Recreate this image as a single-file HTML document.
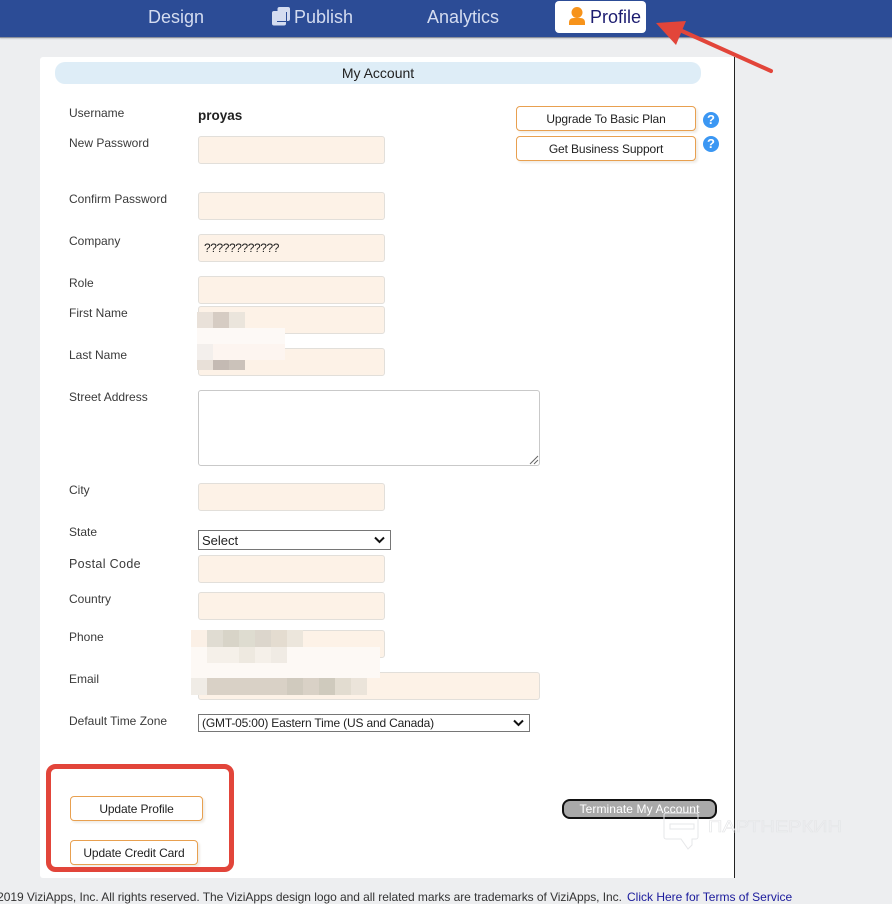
<!DOCTYPE html>
<html lang="en"><head><meta charset="utf-8"><title>My Account</title>
<style>
html,body{margin:0;padding:0}
body{width:892px;height:901px;position:relative;overflow:hidden;background:#edeef0;font-family:"Liberation Sans",sans-serif;color:#333}
#page>*{position:absolute}
.bar{left:0;top:0;width:892px;height:37px;background:#2c4c96;border-bottom:1px solid #8d919c;box-shadow:0 1px 1px #c9cbd0}
.nav{font-size:18px;color:#d4dcf0;line-height:20px;top:7px;white-space:nowrap}
.card{left:40px;top:57px;width:694px;height:821px;background:#fff;border-right:1px solid #222;border-radius:3px 0 0 3px}
.title{left:55px;top:62px;width:646px;height:22px;background:#deedf7;border-radius:10px;text-align:center;font-size:14px;line-height:22px;color:#222}
.l{left:69px;font-size:12px;line-height:14px;color:#3a3a3a;white-space:nowrap}
.i{left:198px;width:185px;height:26px;background:#fdf2e7;border:1px solid #e2dfda;border-radius:3px}
.b{box-sizing:border-box;height:25px;background:#fff;border:1px solid #e8a050;border-radius:4px;box-shadow:2px 2px 2px #f0ece6;text-align:center;font-size:12px;letter-spacing:-.12px;line-height:25px;color:#222;white-space:nowrap}
.q{width:16px;height:16px;border-radius:50%;background:#3b97f3;color:#fff;text-align:center;font-size:13px;font-weight:bold;line-height:16px}
.s{box-sizing:border-box;background:#fff;border:1px solid #767676;font-size:13px;line-height:19px;color:#222;padding-left:3px;white-space:nowrap}
.s svg{position:absolute;right:5px;top:5px}
.p{height:16px}
</style></head><body><div id="page">
<div class="bar"></div>
<div class="nav" style="left:148px">Design</div>
<svg style="left:271px;top:6px" width="20" height="20" viewBox="0 0 20 20"><rect x="6.500" y="1" width="12.500" height="14" rx="2" fill="#d4dcf0"/><rect x="1" y="5" width="14" height="14.500" rx="2" fill="#d4dcf0"/><path d="M15.500 6v9.500H6" fill="none" stroke="#2c4c96" stroke-width="1"/></svg>
<div class="nav" style="left:294px">Publish</div>
<div class="nav" style="left:427px">Analytics</div>
<div style="left:555px;top:1px;width:91px;height:32px;background:#fff;border-radius:4px"></div>
<svg style="left:568px;top:6px" width="18" height="20" viewBox="0 0 18 20"><circle cx="9" cy="6.500" r="5.500" fill="#f7931a"/><path d="M1 19v-2.500c0-3 2-4.500 5-4.500h6c3 0 5 1.500 5 4.500V19z" fill="#f7931a"/></svg>
<div class="nav" style="left:590px;color:#1c1c70">Profile</div>

<div class="card"></div>
<div class="title">My Account</div>

<div class="l" style="top:106px">Username</div>
<div style="left:198px;top:108px;font-size:13.500px;font-weight:bold;line-height:16px;color:#222">proyas</div>
<div class="l" style="top:136px">New Password</div><div class="i" style="top:136px"></div>
<div class="l" style="top:192px">Confirm Password</div><div class="i" style="top:192px"></div>
<div class="l" style="top:234px">Company</div><div class="i" style="top:234px"></div>
<div style="left:204px;top:241px;font-size:12px;line-height:14px;color:#222;letter-spacing:-.42px">????????????</div>
<div class="l" style="top:276px">Role</div><div class="i" style="top:276px"></div>
<div class="l" style="top:306px">First Name</div><div class="i" style="top:306px"></div>
<div class="l" style="top:348px">Last Name</div><div class="i" style="top:348px"></div>
<div class="l" style="top:390px">Street Address</div>
<div style="left:198px;top:390px;width:340px;height:74px;background:#fff;border:1px solid #c9c9c9;border-radius:3px"></div>
<svg style="left:529px;top:455px" width="10" height="10" viewBox="0 0 10 10"><path d="M1 9 9 1M5 9 9 5" stroke="#666" stroke-width="1"/></svg>
<div class="l" style="top:483px">City</div><div class="i" style="top:483px"></div>
<div class="l" style="top:525px">State</div>
<div class="s" style="left:198px;top:530px;width:193px;height:20px">Select<svg width="11" height="8" viewBox="0 0 11 8"><path d="M1 1.500 5.500 6 10 1.500" fill="none" stroke="#111" stroke-width="2"/></svg></div>
<div class="l" style="top:557px;font-size:12.500px;letter-spacing:.35px">Postal Code</div><div class="i" style="top:555px"></div>
<div class="l" style="top:592px">Country</div><div class="i" style="top:592px"></div>
<div class="l" style="top:630px">Phone</div><div class="i" style="top:630px"></div>
<div class="l" style="top:672px">Email</div><div class="i" style="top:672px;width:340px"></div>
<div class="l" style="top:714px">Default Time Zone</div>
<div class="s" style="left:198px;top:714px;width:332px;height:18px;line-height:17px;font-size:12px;letter-spacing:-.17px">(GMT-05:00) Eastern Time (US and Canada)<svg style="top:4px" width="11" height="8" viewBox="0 0 11 8"><path d="M1 1.500 5.500 6 10 1.500" fill="none" stroke="#111" stroke-width="2"/></svg></div>

<!-- pixelated blur -->
<div class="p" style="left:197px;top:312px;width:16px;background:#e9e1d9"></div>
<div class="p" style="left:213px;top:312px;width:16px;background:#d6ccc3"></div>
<div class="p" style="left:229px;top:312px;width:16px;background:#ebe5dc"></div>
<div class="p" style="left:197px;top:328px;width:88px;background:#fdf9f6"></div>
<div class="p" style="left:197px;top:344px;width:16px;background:#f3efec"></div>
<div class="p" style="left:213px;top:344px;width:72px;background:#fdf5f0"></div>
<div class="p" style="left:197px;top:360px;width:16px;height:10px;background:#e8e0d8"></div>
<div class="p" style="left:213px;top:360px;width:16px;height:10px;background:#c4bab3"></div>
<div class="p" style="left:229px;top:360px;width:16px;height:10px;background:#cbc2ba"></div>

<div style="left:191px;top:630px;width:16px;height:17px;background:#fbf0e6"></div>
<div style="left:207px;top:630px;width:16px;height:17px;background:#e0dcd2"></div>
<div style="left:223px;top:630px;width:16px;height:17px;background:#d8d4c8"></div>
<div style="left:239px;top:630px;width:16px;height:17px;background:#dedcd0"></div>
<div style="left:255px;top:630px;width:16px;height:17px;background:#dcd6cc"></div>
<div style="left:271px;top:630px;width:16px;height:17px;background:#e4dcd0"></div>
<div style="left:287px;top:630px;width:16px;height:17px;background:#ece6dc"></div>
<div style="left:191px;top:647px;width:189px;height:31px;background:#fdf9f5"></div>
<div style="left:207px;top:647px;width:32px;height:16px;background:#f5f0e9"></div>
<div style="left:239px;top:647px;width:16px;height:16px;background:#eee9e0"></div>
<div style="left:255px;top:647px;width:16px;height:16px;background:#f5f0e9"></div>
<div style="left:271px;top:647px;width:16px;height:16px;background:#f0ebe4"></div>
<div style="left:191px;top:678px;width:16px;height:17px;background:#f0ece6"></div>
<div style="left:207px;top:678px;width:112px;height:17px;background:#d9d1c6"></div>
<div style="left:287px;top:678px;width:16px;height:17px;background:#d0cabe"></div>
<div style="left:319px;top:678px;width:16px;height:17px;background:#cfcabd"></div>
<div style="left:335px;top:678px;width:16px;height:17px;background:#e2dcd0"></div>
<div style="left:351px;top:678px;width:16px;height:17px;background:#ebe4da"></div>

<div class="b" style="left:516px;top:106px;width:180px">Upgrade To Basic Plan</div>
<div class="b" style="left:516px;top:136px;width:180px">Get Business Support</div>
<div class="q" style="left:703px;top:112px">?</div>
<div class="q" style="left:703px;top:136px">?</div>
<div class="b" style="left:70px;top:796px;width:133px">Update Profile</div>
<div class="b" style="left:70px;top:840px;width:128px">Update Credit Card</div>
<div style="box-sizing:border-box;left:562px;top:799px;width:155px;height:20px;background:#a9a9a9;border:2px solid #111;border-radius:8px;text-align:center;color:#fff;font-size:12px;letter-spacing:.1px;line-height:16px;white-space:nowrap">Terminate My Account</div>

<svg style="left:0;top:0" width="892" height="901" viewBox="0 0 892 901">
<path d="M666 813h30a2 2 0 0 1 2 2v22a2 2 0 0 1-2 2h-4v6l-4 4-7-10h-15a2 2 0 0 1-2-2v-22a2 2 0 0 1 2-2zM670 824h24v5h-24z" fill="none" stroke="#e6e7e9" stroke-width="1"/>
<text x="708" y="832" font-family="Liberation Sans,sans-serif" font-size="17" fill="none" stroke="#e4e5e7" stroke-width=".6" textLength="134" lengthAdjust="spacingAndGlyphs">ПАРТНЕРКИН</text>
<rect x="48.500" y="766.500" width="183" height="103" rx="7" fill="none" stroke="#e2453a" stroke-width="5"/>
<path d="M771 71 682 31" stroke="#e2453a" stroke-width="4" stroke-linecap="round"/>
<path d="M656 23 686 21 676 45z" fill="#e2453a"/>
</svg>

<div style="left:-15px;top:890px;font-size:12px;letter-spacing:-.05px;line-height:14px;color:#333;white-space:nowrap">© 2019 ViziApps, Inc. All rights reserved. The ViziApps design logo and all related marks are trademarks of ViziApps, Inc.</div>
<div style="left:627px;top:890px;font-size:12px;line-height:14px;color:#1a1a9c;white-space:nowrap">Click Here for Terms of Service</div>
</div></body></html>
